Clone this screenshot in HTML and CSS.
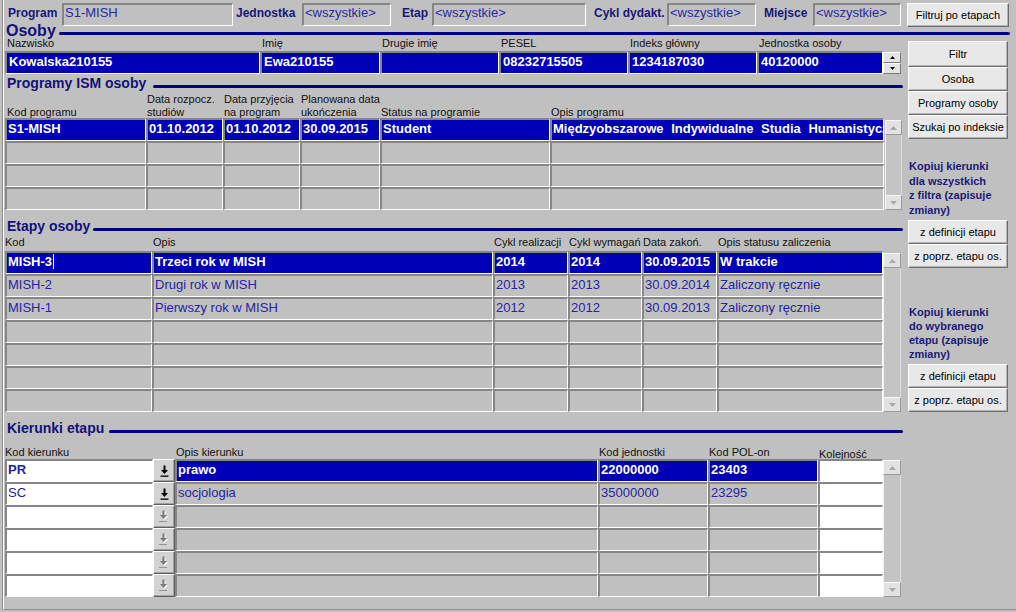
FILE: index.html
```html
<!DOCTYPE html>
<html lang="pl">
<head>
<meta charset="utf-8">
<title>Osoby – kierunki etapów</title>
<link rel="stylesheet" href="styles.css">
</head>
<body>
<div class="frame">
  <div class="topbar">
    <span class="tl tl-prog">Program</span><span class="tf tf-prog">S1-MISH</span>
    <span class="tl tl-jedn">Jednostka</span><span class="tf tf-89">&lt;wszystkie&gt;</span>
    <span class="tl tl-etap">Etap</span><span class="tf tf-etap">&lt;wszystkie&gt;</span>
    <span class="tl tl-cykl">Cykl dydakt.</span><span class="tf tf-89">&lt;wszystkie&gt;</span>
    <span class="tl tl-miej">Miejsce</span><span class="tf tf-88">&lt;wszystkie&gt;</span>
    <button class="btn btn-top">Filtruj po etapach</button>
  </div>

  <div class="head head-os"><span>Osoby</span><span class="rule rule-os"></span></div>

  <div class="main">
    <div class="left">
      <div class="lbls lbl-os">
        <span>Nazwisko</span><span>Imię</span><span>Drugie imię</span><span>PESEL</span><span>Indeks główny</span><span>Jednostka osoby</span>
      </div>
      <div class="tbl">
        <div class="grid g-os">
          <div class="c sel">Kowalska210155</div>
          <div class="c sel">Ewa210155</div>
          <div class="c sel"></div>
          <div class="c sel">08232715505</div>
          <div class="c sel">1234187030</div>
          <div class="c sel">40120000</div>
        </div>
        <div class="spin">
          <div class="spb"><svg width="5" height="3" viewBox="0 0 5 3"><path d="M0 3L2.5 0L5 3Z" fill="#000"/></svg></div>
          <div class="spb"><svg width="5" height="3" viewBox="0 0 5 3"><path d="M0 0L5 0L2.5 3Z" fill="#000"/></svg></div>
        </div>
      </div>

      <div class="head head-sub head-prog"><span>Programy ISM osoby</span><span class="rule rule-prog"></span></div>
      <div class="lbls lbl-prog">
        <span>Kod programu</span><span>Data rozpocz.<br>studiów</span><span>Data przyjęcia<br>na program</span><span>Planowana data<br>ukończenia</span><span>Status na programie</span><span>Opis programu</span>
      </div>
      <div class="tbl">
        <div class="grid g-prog">
          <div class="c sel">S1-MISH</div><div class="c sel">01.10.2012</div><div class="c sel">01.10.2012</div><div class="c sel">30.09.2015</div><div class="c sel">Student</div><div class="c sel wide">Międzyobszarowe Indywidualne Studia Humanistyczne</div>
          <div class="c"></div><div class="c"></div><div class="c"></div><div class="c"></div><div class="c"></div><div class="c"></div>
          <div class="c"></div><div class="c"></div><div class="c"></div><div class="c"></div><div class="c"></div><div class="c"></div>
          <div class="c"></div><div class="c"></div><div class="c"></div><div class="c"></div><div class="c"></div><div class="c"></div>
        </div>
        <div class="scroll sc-prog">
          <div class="sbb"><svg width="7" height="4" viewBox="0 0 7 4"><path d="M0 4L3.5 0L7 4Z" fill="#a8a8a8"/></svg></div>
          <div class="sbt"></div>
          <div class="sbb"><svg width="7" height="4" viewBox="0 0 7 4"><path d="M0 0L7 0L3.5 4Z" fill="#a8a8a8"/></svg></div>
        </div>
      </div>

      <div class="head head-sub head-et"><span>Etapy osoby</span><span class="rule rule-et"></span></div>
      <div class="lbls lbl-et">
        <span>Kod</span><span>Opis</span><span>Cykl realizacji</span><span>Cykl wymagań</span><span>Data zakoń.</span><span>Opis statusu zaliczenia</span>
      </div>
      <div class="tbl">
        <div class="grid g-et">
          <div class="c sel"><span class="caret">MISH-3</span></div><div class="c sel">Trzeci rok w MISH</div><div class="c sel">2014</div><div class="c sel">2014</div><div class="c sel">30.09.2015</div><div class="c sel">W trakcie</div>
          <div class="c">MISH-2</div><div class="c">Drugi rok w MISH</div><div class="c">2013</div><div class="c">2013</div><div class="c">30.09.2014</div><div class="c">Zaliczony ręcznie</div>
          <div class="c">MISH-1</div><div class="c">Pierwszy rok w MISH</div><div class="c">2012</div><div class="c">2012</div><div class="c">30.09.2013</div><div class="c">Zaliczony ręcznie</div>
          <div class="c"></div><div class="c"></div><div class="c"></div><div class="c"></div><div class="c"></div><div class="c"></div>
          <div class="c"></div><div class="c"></div><div class="c"></div><div class="c"></div><div class="c"></div><div class="c"></div>
          <div class="c"></div><div class="c"></div><div class="c"></div><div class="c"></div><div class="c"></div><div class="c"></div>
          <div class="c"></div><div class="c"></div><div class="c"></div><div class="c"></div><div class="c"></div><div class="c"></div>
        </div>
        <div class="scroll sc-et">
          <div class="sbb"><svg width="7" height="4" viewBox="0 0 7 4"><path d="M0 4L3.5 0L7 4Z" fill="#a8a8a8"/></svg></div>
          <div class="sbt"></div>
          <div class="sbb"><svg width="7" height="4" viewBox="0 0 7 4"><path d="M0 0L7 0L3.5 4Z" fill="#a8a8a8"/></svg></div>
        </div>
      </div>

      <div class="head head-sub head-ki"><span>Kierunki etapu</span><span class="rule rule-ki"></span></div>
      <div class="lbls lbl-ki">
        <span>Kod kierunku</span><span></span><span>Opis kierunku</span><span>Kod jednostki</span><span>Kod POL-on</span><span class="lo">Kolejność</span>
      </div>
      <div class="tbl">
        <div class="grid g-ki">
          <div class="c wh b">PR</div>
          <div class="kb"><svg width="9" height="12" viewBox="0 0 9 12"><path d="M3.5 0.5h2v4.5h2.5l-3.5 4-3.5-4h2.5z" fill="#000"/><rect x="0.5" y="10.5" width="8" height="1.3" fill="#000"/></svg></div>
          <div class="c sel">prawo</div><div class="c sel">22000000</div><div class="c sel">23403</div><div class="c wh"></div>

          <div class="c wh">SC</div>
          <div class="kb"><svg width="9" height="12" viewBox="0 0 9 12"><path d="M3.5 0.5h2v4.5h2.5l-3.5 4-3.5-4h2.5z" fill="#000"/><rect x="0.5" y="10.5" width="8" height="1.3" fill="#000"/></svg></div>
          <div class="c">socjologia</div><div class="c">35000000</div><div class="c">23295</div><div class="c wh"></div>

          <div class="c wh"></div>
          <div class="kb"><svg width="10" height="13" viewBox="0 0 10 13"><path d="M4.5 1.5h2v4.5h2.5l-3.5 4-3.5-4h2.5z" fill="#fff"/><path d="M3.5 0.5h2v4.5h2.5l-3.5 4-3.5-4h2.5z" fill="#7a7a7a"/><line x1="0.5" y1="11.5" x2="8.5" y2="11.5" stroke="#555" stroke-width="1" stroke-dasharray="1 1"/></svg></div>
          <div class="c"></div><div class="c"></div><div class="c"></div><div class="c wh"></div>

          <div class="c wh"></div>
          <div class="kb"><svg width="10" height="13" viewBox="0 0 10 13"><path d="M4.5 1.5h2v4.5h2.5l-3.5 4-3.5-4h2.5z" fill="#fff"/><path d="M3.5 0.5h2v4.5h2.5l-3.5 4-3.5-4h2.5z" fill="#7a7a7a"/><line x1="0.5" y1="11.5" x2="8.5" y2="11.5" stroke="#555" stroke-width="1" stroke-dasharray="1 1"/></svg></div>
          <div class="c"></div><div class="c"></div><div class="c"></div><div class="c wh"></div>

          <div class="c wh"></div>
          <div class="kb"><svg width="10" height="13" viewBox="0 0 10 13"><path d="M4.5 1.5h2v4.5h2.5l-3.5 4-3.5-4h2.5z" fill="#fff"/><path d="M3.5 0.5h2v4.5h2.5l-3.5 4-3.5-4h2.5z" fill="#7a7a7a"/><line x1="0.5" y1="11.5" x2="8.5" y2="11.5" stroke="#555" stroke-width="1" stroke-dasharray="1 1"/></svg></div>
          <div class="c"></div><div class="c"></div><div class="c"></div><div class="c wh"></div>

          <div class="c wh"></div>
          <div class="kb"><svg width="10" height="13" viewBox="0 0 10 13"><path d="M4.5 1.5h2v4.5h2.5l-3.5 4-3.5-4h2.5z" fill="#fff"/><path d="M3.5 0.5h2v4.5h2.5l-3.5 4-3.5-4h2.5z" fill="#7a7a7a"/><line x1="0.5" y1="11.5" x2="8.5" y2="11.5" stroke="#555" stroke-width="1" stroke-dasharray="1 1"/></svg></div>
          <div class="c"></div><div class="c"></div><div class="c"></div><div class="c wh"></div>
        </div>
        <div class="scroll sc-ki">
          <div class="sbb"><svg width="7" height="4" viewBox="0 0 7 4"><path d="M0 4L3.5 0L7 4Z" fill="#a8a8a8"/></svg></div>
          <div class="sbt"></div>
          <div class="sbb"><svg width="7" height="4" viewBox="0 0 7 4"><path d="M0 0L7 0L3.5 4Z" fill="#a8a8a8"/></svg></div>
        </div>
      </div>
    </div>

    <div class="right">
      <button class="btn btn-filtr">Filtr</button>
      <button class="btn">Osoba</button>
      <button class="btn">Programy osoby</button>
      <button class="btn">Szukaj po indeksie</button>
      <div class="note note1">Kopiuj kierunki<br>dla wszystkich<br>z filtra (zapisuje<br>zmiany)</div>
      <button class="btn gap3">z definicji etapu</button>
      <button class="btn">z poprz. etapu os.</button>
      <div class="note note2">Kopiuj kierunki<br>do wybranego<br>etapu (zapisuje<br>zmiany)</div>
      <button class="btn gap3">z definicji etapu</button>
      <button class="btn">z poprz. etapu os.</button>
    </div>
  </div>
</div>
</body>
</html>
```

FILE: styles.css
```css
html, body {
  margin: 0;
  padding: 0;
}
body {
  width: 1016px;
  height: 612px;
  overflow: hidden;
  background: #c0c0c0;
  font-family: "Liberation Sans", Arial, sans-serif;
}
.frame {
  box-sizing: border-box;
  height: 610px;
  margin-left: 3px;
  border-left: 1px solid #ffffff;
  border-bottom: 1px solid #8a8a8a;
  box-shadow: -1px 0 0 #8e8e8e;
}

/* top filter bar */
.topbar {
  display: flex;
  align-items: baseline;
  height: 23px;
  padding: 3px 0 0 4px;
}
.tl {
  font-size: 12px;
  font-weight: bold;
  line-height: 14px;
  color: #17177a;
  white-space: nowrap;
}
.tl-prog { width: 54px; }
.tl-jedn { width: 66px; margin-left: 3px; }
.tl-etap { width: 30px; margin-left: 11px; }
.tl-cykl { width: 73px; margin-left: 8px; }
.tl-miej { width: 49px; margin-left: 8px; }
.tf {
  box-sizing: border-box;
  height: 23px;
  border-style: solid;
  border-width: 2px 1px 1px 2px;
  border-color: #868686 #ffffff #ffffff #868686;
  background: #c0c0c0;
  padding-left: 1px;
  font-size: 13px;
  line-height: 15px;
  color: #2828a8;
  white-space: nowrap;
}
.tf-prog { width: 171px; }
.tf-89 { width: 89px; }
.tf-88 { width: 88px; }
.tf-etap { width: 154px; }

/* buttons */
.btn {
  box-sizing: border-box;
  display: block;
  width: 100px;
  height: 24px;
  margin: 0;
  padding: 0;
  background: #e8e8e8;
  border: 1px solid;
  border-color: #fdfdfd #6c6c6c #6c6c6c #fdfdfd;
  box-shadow: inset -1px -1px 0 #b4b4b4;
  font-family: "Liberation Sans", Arial, sans-serif;
  font-size: 11px;
  color: #000000;
  text-align: center;
  white-space: nowrap;
}
.btn-top {
  align-self: flex-start;
  width: 102px;
  margin-left: 6px;
}
.btn-filtr {
  height: 26px;
  margin-top: 5px;
}
.gap3 { margin-top: 3px; }

/* section headings */
.head {
  display: flex;
  align-items: baseline;
  font-weight: bold;
  color: #12127a;
  white-space: nowrap;
}
.rule {
  flex: 1;
  height: 3px;
  margin-left: 3px;
  background: #000080;
  border-radius: 2px;
}
.head-os {
  height: 10px;
  line-height: 10px;
  font-size: 16px;
  padding-left: 2px;
  margin-right: 6px;
}
.rule-os { transform: translateY(-1px); }
.head-sub {
  font-size: 14px;
  padding-left: 2px;
  margin-right: 5px;
}
.head-prog {
  height: 19px;
  line-height: 19px;
}
.rule-prog { margin-left: 7px; }
.head-et, .head-ki {
  padding-top: 8px;
  height: 16px;
  line-height: 16px;
}
.rule-ki { margin-left: 5px; }

/* layout */
.main {
  display: flex;
}
.left {
  box-sizing: border-box;
  width: 904px;
  padding-left: 1px;
}
.right {
  width: 101px;
  display: flex;
  flex-direction: column;
}
.note {
  font-size: 11px;
  font-weight: bold;
  color: #1a1a78;
  padding-left: 1px;
  white-space: nowrap;
}
.note1 { margin-top: 20px; line-height: 14.5px; }
.note2 { margin-top: 37px; line-height: 14px; }

/* labels */
.lbls {
  display: grid;
  font-size: 11px;
  color: #111111;
  white-space: nowrap;
}
.lbls > span { padding-left: 1px; }
.lbl-os {
  grid-template-columns: 255px 120px 119px 129px 129px 126px;
  height: 15px;
  line-height: 15px;
}
.lbl-os > span { padding-left: 2px; }
.lbl-prog {
  grid-template-columns: 141px 77px 77px 80px 170px 334px;
  grid-template-rows: 25px;
  align-items: end;
  line-height: 12.5px;
}
.lbl-prog > span:first-child { padding-left: 2px; }
.lbl-et {
  grid-template-columns: 147px 341px 75px 74px 75px 166px;
  height: 17px;
  line-height: 17px;
}
.lbl-et > span:first-child { padding-left: 0; }
.lbl-ki {
  box-sizing: border-box;
  grid-template-columns: 148px 22px 423px 110px 110px 65px;
  grid-template-rows: 13px;
  height: 23px;
  padding-top: 10px;
  line-height: 13px;
}
.lbl-ki > span:first-child { padding-left: 0; }
.lbl-ki .lo { padding-top: 2px; }

/* tables */
.tbl {
  display: flex;
}
.grid {
  display: grid;
  grid-auto-rows: 23px;
}
.g-os { grid-template-columns: 255px 120px 119px 129px 129px 126px; }
.g-prog { grid-template-columns: 141px 77px 77px 80px 170px 334px; }
.g-et { grid-template-columns: 147px 341px 75px 74px 75px 166px; }
.g-ki { grid-template-columns: 148px 22px 423px 110px 110px 65px; }

.c {
  box-sizing: border-box;
  height: 23px;
  border-style: solid;
  border-width: 2px 1px 1px 2px;
  border-color: #868686 #ffffff #ffffff #868686;
  background: #c0c0c0;
  padding-left: 1px;
  font-size: 13px;
  line-height: 18.5px;
  color: #2424a4;
  white-space: nowrap;
  overflow: hidden;
}
.g-os .c { padding-left: 2px; }
.c.sel {
  background: #0000b8;
  color: #ffffff;
  font-weight: bold;
}
.c.wide { word-spacing: 4px; }
.c.wh { background: #ffffff; }
.c.b { font-weight: bold; }
.caret {
  padding-right: 1px;
  border-right: 1px solid #ffffff;
}

.kb {
  box-sizing: border-box;
  height: 23px;
  border: 1px solid;
  border-color: #ffffff #5e5e5e #5e5e5e #ffffff;
  box-shadow: inset -1px -1px 0 #a0a0a0;
  background: #d2d2d2;
  display: flex;
  align-items: center;
  justify-content: center;
}

/* scrollbars */
.scroll {
  display: flex;
  flex-direction: column;
  width: 17px;
  margin-top: 2px;
}
.sc-prog { margin-left: 1px; width: 17px; }
.sc-et { width: 18px; }
.sc-ki { width: 18px; margin-top: 1px; }
.sbb {
  box-sizing: border-box;
  height: 15px;
  background: #e2e2e2;
  border: 1px solid;
  border-color: #f8f8f8 #9a9a9a #9a9a9a #f8f8f8;
  display: flex;
  align-items: center;
  justify-content: center;
}
.sbt {
  flex: 1;
  background: #c4c4c4;
  border-left: 1px solid #f2f2f2;
  border-right: 1px solid #dedede;
}

/* spin buttons */
.spin {
  display: flex;
  flex-direction: column;
  width: 18px;
  padding-top: 1px;
}
.spb {
  box-sizing: border-box;
  height: 11px;
  background: #e4e4e4;
  border: 1px solid;
  border-color: #ffffff #7a7a7a #7a7a7a #ffffff;
  display: flex;
  align-items: center;
  justify-content: center;
}
```
